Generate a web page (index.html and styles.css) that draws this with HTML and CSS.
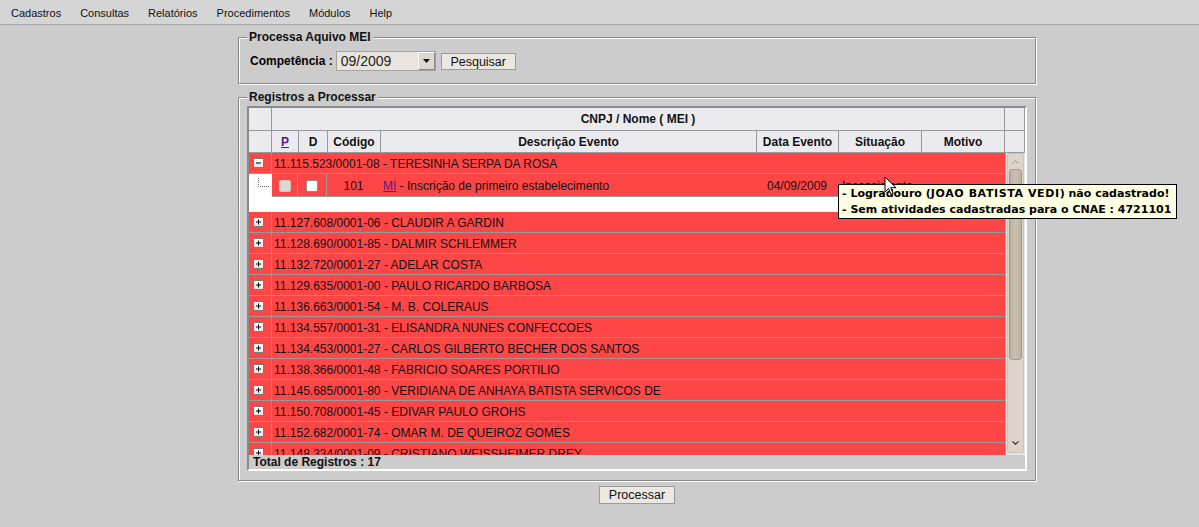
FILE: index.html
```html
<!DOCTYPE html>
<html lang="pt-BR">
<head>
<meta charset="utf-8">
<title>Processa Aquivo MEI</title>
<link rel="stylesheet" href="styles.css">
</head>
<body>
<nav class="menubar">
  <span class="menu-item">Cadastros</span>
  <span class="menu-item">Consultas</span>
  <span class="menu-item">Relatórios</span>
  <span class="menu-item">Procedimentos</span>
  <span class="menu-item">Módulos</span>
  <span class="menu-item">Help</span>
</nav>
<main class="main">
  <fieldset class="box box-search">
    <legend class="legend">Processa Aquivo MEI</legend>
    <div class="search-row">
      <span class="field-label">Competência :</span>
      <div class="select">
        <span class="select-value">09/2009</span>
        <span class="select-btn"><svg width="7" height="4" viewBox="0 0 7 4"><path d="M0 0h7L3.5 4z" fill="#111"/></svg></span>
      </div>
      <span class="btn btn-search">Pesquisar</span>
    </div>
  </fieldset>

  <fieldset class="box box-records">
    <legend class="legend">Registros a Processar</legend>
    <div class="grid-wrap">
      <div class="head-row head-top">
        <div class="hc"></div>
        <div class="hc hc-span">CNPJ / Nome ( MEI )</div>
        <div class="hc"></div>
      </div>
      <div class="head-row head-cols">
        <div class="hc"></div>
        <div class="hc"><span class="link">P</span></div>
        <div class="hc">D</div>
        <div class="hc">Código</div>
        <div class="hc">Descrição Evento</div>
        <div class="hc">Data Evento</div>
        <div class="hc">Situação</div>
        <div class="hc">Motivo</div>
        <div class="hc"></div>
      </div>
      <div class="body">
        <div class="rows">
          <div class="grow">
            <div class="gexp"><span class="exp"><svg width="9" height="8" viewBox="0 0 9 8"><path d="M2 4h5" stroke="#000" stroke-width="1"/></svg></span></div>
            <div class="gtext">11.115.523/0001-08 - TERESINHA SERPA DA ROSA</div>
          </div>
          <div class="detail">
            <div class="tree"><svg width="22" height="20" viewBox="0 0 22 20"><path d="M9.5 4v8.5H21" stroke="#666" stroke-width="1" stroke-dasharray="1 1" fill="none"/></svg></div>
            <div class="drow">
              <div class="dc dc-b"><span class="chk chk-dis"></span></div>
              <div class="dc dc-b"><span class="chk"></span></div>
              <div class="dc dc-c">101</div>
              <div class="dc dc-l"><span class="dtext"><span class="link">MI</span> - Inscrição de primeiro estabelecimento</span></div>
              <div class="dc dc-c">04/09/2009</div>
              <div class="dc dc-s">Inconsistente</div>
              <div class="dc"></div>
            </div>
          </div>
          <div class="grow"><div class="gexp"><span class="exp"><svg width="9" height="8" viewBox="0 0 9 8"><path d="M2 4h5M4.5 1.5v5" stroke="#000" stroke-width="1"/></svg></span></div><div class="gtext">11.127.608/0001-06 - CLAUDIR A GARDIN</div></div>
          <div class="grow"><div class="gexp"><span class="exp"><svg width="9" height="8" viewBox="0 0 9 8"><path d="M2 4h5M4.5 1.5v5" stroke="#000" stroke-width="1"/></svg></span></div><div class="gtext">11.128.690/0001-85 - DALMIR SCHLEMMER</div></div>
          <div class="grow"><div class="gexp"><span class="exp"><svg width="9" height="8" viewBox="0 0 9 8"><path d="M2 4h5M4.5 1.5v5" stroke="#000" stroke-width="1"/></svg></span></div><div class="gtext">11.132.720/0001-27 - ADELAR COSTA</div></div>
          <div class="grow"><div class="gexp"><span class="exp"><svg width="9" height="8" viewBox="0 0 9 8"><path d="M2 4h5M4.5 1.5v5" stroke="#000" stroke-width="1"/></svg></span></div><div class="gtext">11.129.635/0001-00 - PAULO RICARDO BARBOSA</div></div>
          <div class="grow"><div class="gexp"><span class="exp"><svg width="9" height="8" viewBox="0 0 9 8"><path d="M2 4h5M4.5 1.5v5" stroke="#000" stroke-width="1"/></svg></span></div><div class="gtext">11.136.663/0001-54 - M. B. COLERAUS</div></div>
          <div class="grow"><div class="gexp"><span class="exp"><svg width="9" height="8" viewBox="0 0 9 8"><path d="M2 4h5M4.5 1.5v5" stroke="#000" stroke-width="1"/></svg></span></div><div class="gtext">11.134.557/0001-31 - ELISANDRA NUNES CONFECCOES</div></div>
          <div class="grow"><div class="gexp"><span class="exp"><svg width="9" height="8" viewBox="0 0 9 8"><path d="M2 4h5M4.5 1.5v5" stroke="#000" stroke-width="1"/></svg></span></div><div class="gtext">11.134.453/0001-27 - CARLOS GILBERTO BECHER DOS SANTOS</div></div>
          <div class="grow"><div class="gexp"><span class="exp"><svg width="9" height="8" viewBox="0 0 9 8"><path d="M2 4h5M4.5 1.5v5" stroke="#000" stroke-width="1"/></svg></span></div><div class="gtext">11.138.366/0001-48 - FABRICIO SOARES PORTILIO</div></div>
          <div class="grow"><div class="gexp"><span class="exp"><svg width="9" height="8" viewBox="0 0 9 8"><path d="M2 4h5M4.5 1.5v5" stroke="#000" stroke-width="1"/></svg></span></div><div class="gtext">11.145.685/0001-80 - VERIDIANA DE ANHAYA BATISTA SERVICOS DE</div></div>
          <div class="grow"><div class="gexp"><span class="exp"><svg width="9" height="8" viewBox="0 0 9 8"><path d="M2 4h5M4.5 1.5v5" stroke="#000" stroke-width="1"/></svg></span></div><div class="gtext">11.150.708/0001-45 - EDIVAR PAULO GROHS</div></div>
          <div class="grow"><div class="gexp"><span class="exp"><svg width="9" height="8" viewBox="0 0 9 8"><path d="M2 4h5M4.5 1.5v5" stroke="#000" stroke-width="1"/></svg></span></div><div class="gtext">11.152.682/0001-74 - OMAR M. DE QUEIROZ GOMES</div></div>
          <div class="grow"><div class="gexp"><span class="exp"><svg width="9" height="8" viewBox="0 0 9 8"><path d="M2 4h5M4.5 1.5v5" stroke="#000" stroke-width="1"/></svg></span></div><div class="gtext">11.148.334/0001-09 - CRISTIANO WEISSHEIMER DREY</div></div>
        </div>
        <div class="vscroll">
          <div class="track">
            <span class="arrow arrow-up"><svg width="7" height="4" viewBox="0 0 7 4"><path d="M0.5 3.5L3.5 0.8L6.5 3.5" stroke="#9a9088" fill="none"/></svg></span>
            <span class="thumb"></span>
            <span class="arrow arrow-down"><svg width="7" height="4" viewBox="0 0 7 4"><path d="M0.5 0.5L3.5 3.2L6.5 0.5" stroke="#333" stroke-width="1.2" fill="none"/></svg></span>
          </div>
        </div>
      </div>
      <div class="total">Total de Registros : 17</div>
    </div>
  </fieldset>

  <div class="actions"><span class="btn btn-process">Processar</span></div>
</main>

<div class="tooltip">
  <div>- Logradouro (<span class="wide">JOAO BATISTA VEDI</span>) não cadastrado!</div>
  <div>- Sem atividades cadastradas para o CNAE : 4721101</div>
</div>
<svg class="cursor" width="13" height="20" viewBox="0 0 13 20"><path d="M1 1v15l3.5-3.5 2.5 6 2.2-1-2.5-5.8H12z" fill="#fff" stroke="#000" stroke-width="1" stroke-linejoin="round"/></svg>
</body>
</html>
```

FILE: styles.css
```css
* { box-sizing: border-box; }

body {
  margin: 0;
  background: #cccccc;
  font-family: "Liberation Sans", Arial, sans-serif;
  font-size: 12px;
  color: #000;
  position: relative;
  height: 527px;
  overflow: hidden;
}

.menubar {
  height: 25px;
  background: #d5d5d5;
  border-bottom: 1px solid #a6a6a6;
  display: flex;
  align-items: center;
  padding: 1px 0 0 11px;
  gap: 19px;
  font-size: 11px;
}

.menu-item { color: #111; }

.main {
  padding-left: 238px;
}

.box {
  width: 798px;
  margin: 0;
  padding: 0;
  border: 1px solid #8a8a8a;
  box-shadow: inset 1px 1px 0 #fff, 1px 1px 0 #fff;
}

.legend {
  margin-left: 8px;
  padding: 0 2px;
  font-weight: bold;
  font-size: 12px;
  line-height: 14px;
  background: #cccccc;
  color: #111;
}

.box-search {
  margin-top: 5px;
  padding: 7px 0 12px 0;
}

.search-row {
  display: flex;
  align-items: center;
  height: 20px;
  padding-left: 11px;
}

.field-label {
  font-weight: bold;
  font-size: 12px;
  margin-right: 3px;
}

.select {
  width: 100px;
  height: 20px;
  border: 1px solid #a8a29a;
  background: #e9e5de;
  display: flex;
  align-items: center;
  justify-content: space-between;
}

.select-value {
  font-size: 14px;
  padding-left: 4px;
  color: #222;
}

.select-btn {
  width: 17px;
  height: 18px;
  border: 1px solid;
  border-color: #fff #8d8780 #8d8780 #fff;
  background: #ddd8d0;
  display: flex;
  align-items: center;
  justify-content: center;
}

.btn {
  display: inline-flex;
  align-items: center;
  justify-content: center;
  height: 17px;
  border: 1px solid #9b9b9b;
  background: #ebe7e1;
  font-size: 12.5px;
  color: #111;
}

.btn-search {
  width: 75px;
  margin-left: 5px;
  padding-top: 1px;
}

.box-records {
  margin-top: 6px;
  padding: 2px 0 9px 0;
}

.grid-wrap {
  width: 780px;
  margin-left: 8px;
  border: 2px solid;
  border-color: #8a8a8a #fff #fff #8a8a8a;
}

.head-row {
  display: grid;
  grid-template-columns: 23px 27px 29px 53px 376px 82px 83px 83px 20px;
  background: #ebebef;
}

.head-top { height: 23px; }
.head-cols { height: 22px; }

.hc {
  border-right: 1px solid #999;
  border-bottom: 1px solid #999;
  display: flex;
  align-items: center;
  justify-content: center;
  font-weight: bold;
  font-size: 12px;
  color: #111;
}

.hc-span { grid-column: span 7; }

.link {
  color: #551a8b;
  text-decoration: underline;
}

.body {
  display: flex;
  height: 302px;
}

.rows {
  width: 756px;
  height: 302px;
  overflow: hidden;
  background: #fff;
}

.grow {
  display: grid;
  grid-template-columns: 23px 1fr;
  height: 21px;
  background: #ff4646;
  border-bottom: 1px solid #999;
}

.gexp {
  border-right: 1px solid #999;
  display: flex;
  align-items: center;
  padding-left: 4px;
}

.exp {
  width: 11px;
  height: 10px;
  border: 1px solid #7a7a7a;
  background: linear-gradient(#ffffff, #e4e4e4);
  display: flex;
  align-items: center;
  justify-content: center;
}

.gtext {
  padding: 2px 0 0 2px;
  line-height: 18px;
  white-space: nowrap;
  color: #111;
}

.detail {
  display: grid;
  grid-template-columns: 23px 1fr;
  height: 38px;
  background: #fff;
}

.tree {
  display: flex;
  align-items: flex-start;
}

.drow {
  display: grid;
  grid-template-columns: 26px 29px 53px 376px 82px 83px 83px;
  height: 23px;
  background: #ff4646;
  border-bottom: 1px solid #999;
}

.dc {
  display: flex;
  align-items: center;
  white-space: nowrap;
  color: #111;
  padding-top: 1px;
}

.dc-b {
  border-right: 1px solid #999;
  justify-content: center;
}

.dc-c { justify-content: center; }
.dc-l { padding-left: 3px; }
.dc-s { padding-left: 4px; }

.dtext { white-space: pre; }

.chk {
  width: 12px;
  height: 12px;
  border: 1px solid #8a8a8a;
  border-radius: 2px;
  background: #fff;
}

.chk-dis {
  border-color: #cfc7bd;
  background: #ddd7cf;
}

.vscroll {
  width: 20px;
  border-left: 1px solid #a0a0a0;
  background: #e6e6e6;
  padding: 0 1px;
}

.track {
  width: 17px;
  height: 300px;
  border: 1px solid #cbc1b5;
  border-radius: 2px;
  background: #ddd5cb;
  display: flex;
  flex-direction: column;
  align-items: center;
}

.arrow {
  height: 15px;
  display: flex;
  align-items: center;
  justify-content: center;
}

.thumb {
  width: 13px;
  height: 191px;
  border: 1px solid #a89a8b;
  border-radius: 3px;
  background: linear-gradient(90deg, #bfb1a1, #cbbfb1 50%, #bfb1a1);
}

.arrow-down {
  margin-top: auto;
  height: 18px;
}

.total {
  height: 14px;
  background: #cccccc;
  font-weight: bold;
  font-size: 12px;
  line-height: 14px;
  padding-left: 4px;
  color: #111;
}

.actions {
  width: 798px;
  display: flex;
  justify-content: center;
  margin-top: 5px;
}

.btn-process {
  width: 76px;
  height: 18px;
}

.tooltip {
  position: absolute;
  left: 838px;
  top: 184px;
  width: 339px;
  height: 35px;
  border: 1px solid #000;
  background: #ffffe1;
  font-family: "DejaVu Sans", sans-serif;
  font-weight: bold;
  font-size: 11px;
  line-height: 16px;
  padding: 1px 0 0 3px;
  white-space: nowrap;
  overflow: hidden;
  color: #000;
}

.wide { letter-spacing: 0.6px; }

.cursor {
  position: absolute;
  left: 884px;
  top: 176px;
}
```
